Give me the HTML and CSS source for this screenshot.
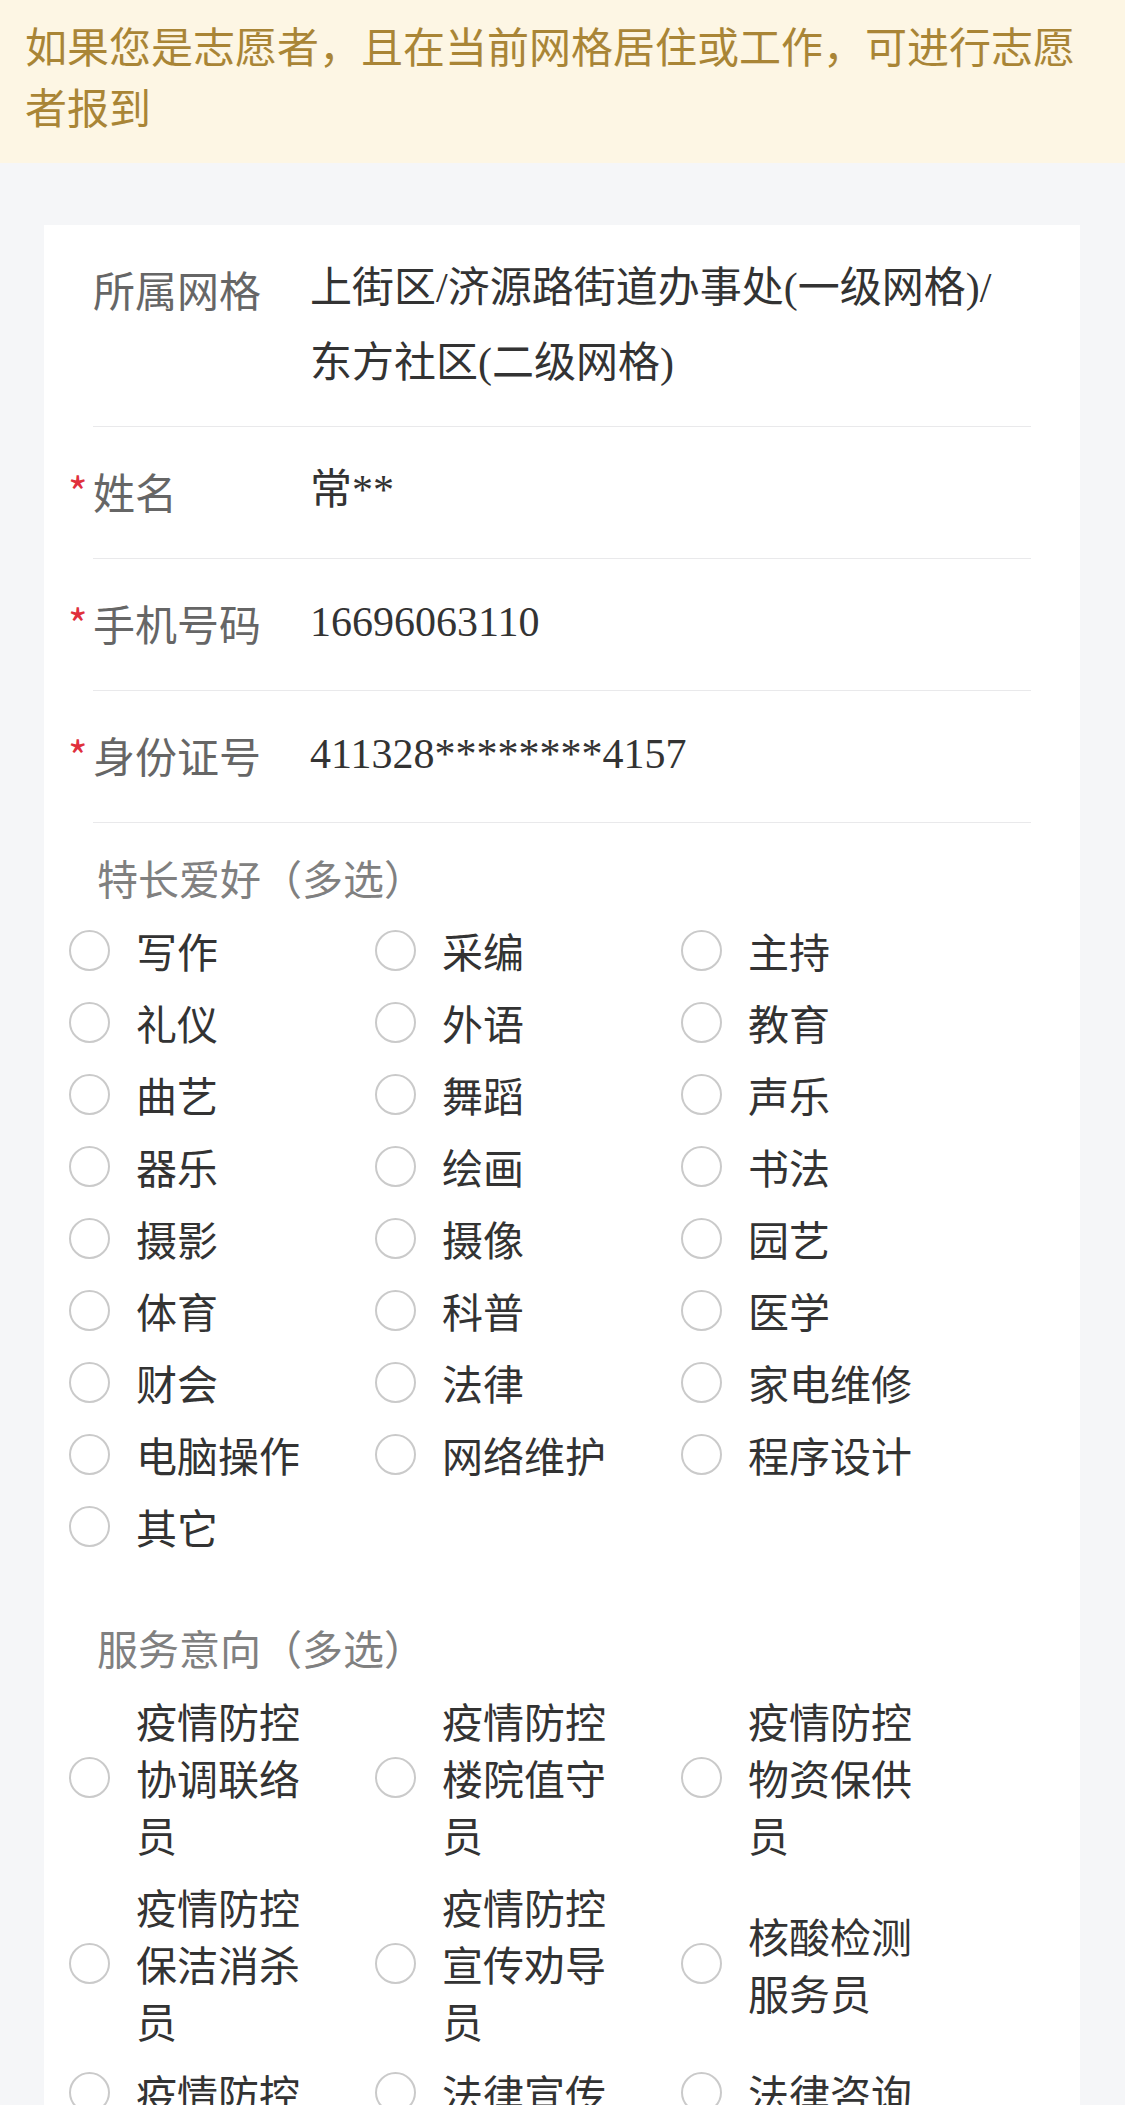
FILE: index.html
```html
<!DOCTYPE html>
<html lang="zh-CN">
<head>
<meta charset="utf-8">
<title>志愿者报到</title>
<link rel="stylesheet" href="styles.css">
</head>
<body>
<div class="notice">如果您是志愿者，且在当前网格居住或工作，可进行志愿者报到</div>
<div class="card">
  <div class="field">
    <div class="label">所属网格</div>
    <div class="value">上街区/济源路街道办事处(一级网格)/东方社区(二级网格)</div>
  </div>
  <div class="field">
    <div class="label"><span class="req">*</span>姓名</div>
    <div class="value">常**</div>
  </div>
  <div class="field">
    <div class="label"><span class="req">*</span>手机号码</div>
    <div class="value">16696063110</div>
  </div>
  <div class="field">
    <div class="label"><span class="req">*</span>身份证号</div>
    <div class="value">411328********4157</div>
  </div>

  <div class="section-title">特长爱好（多选）</div>
  <div class="options">
    <label class="option"><span class="radio"></span><span class="text">写作</span></label>
    <label class="option"><span class="radio"></span><span class="text">采编</span></label>
    <label class="option"><span class="radio"></span><span class="text">主持</span></label>
    <label class="option"><span class="radio"></span><span class="text">礼仪</span></label>
    <label class="option"><span class="radio"></span><span class="text">外语</span></label>
    <label class="option"><span class="radio"></span><span class="text">教育</span></label>
    <label class="option"><span class="radio"></span><span class="text">曲艺</span></label>
    <label class="option"><span class="radio"></span><span class="text">舞蹈</span></label>
    <label class="option"><span class="radio"></span><span class="text">声乐</span></label>
    <label class="option"><span class="radio"></span><span class="text">器乐</span></label>
    <label class="option"><span class="radio"></span><span class="text">绘画</span></label>
    <label class="option"><span class="radio"></span><span class="text">书法</span></label>
    <label class="option"><span class="radio"></span><span class="text">摄影</span></label>
    <label class="option"><span class="radio"></span><span class="text">摄像</span></label>
    <label class="option"><span class="radio"></span><span class="text">园艺</span></label>
    <label class="option"><span class="radio"></span><span class="text">体育</span></label>
    <label class="option"><span class="radio"></span><span class="text">科普</span></label>
    <label class="option"><span class="radio"></span><span class="text">医学</span></label>
    <label class="option"><span class="radio"></span><span class="text">财会</span></label>
    <label class="option"><span class="radio"></span><span class="text">法律</span></label>
    <label class="option"><span class="radio"></span><span class="text">家电维修</span></label>
    <label class="option"><span class="radio"></span><span class="text">电脑操作</span></label>
    <label class="option"><span class="radio"></span><span class="text">网络维护</span></label>
    <label class="option"><span class="radio"></span><span class="text">程序设计</span></label>
    <label class="option"><span class="radio"></span><span class="text">其它</span></label>
  </div>

  <div class="section-title section-gap">服务意向（多选）</div>
  <div class="options">
    <label class="option"><span class="radio"></span><span class="text">疫情防控协调联络员</span></label>
    <label class="option"><span class="radio"></span><span class="text">疫情防控楼院值守员</span></label>
    <label class="option"><span class="radio"></span><span class="text">疫情防控物资保供员</span></label>
    <label class="option"><span class="radio"></span><span class="text">疫情防控保洁消杀员</span></label>
    <label class="option"><span class="radio"></span><span class="text">疫情防控宣传劝导员</span></label>
    <label class="option"><span class="radio"></span><span class="text">核酸检测服务员</span></label>
    <label class="option"><span class="radio"></span><span class="text">疫情防控</span></label>
    <label class="option"><span class="radio"></span><span class="text">法律宣传</span></label>
    <label class="option"><span class="radio"></span><span class="text">法律咨询</span></label>
  </div>
</div>
</body>
</html>
```

FILE: styles.css
```css
* {
  box-sizing: border-box;
}

body {
  margin: 0;
  background: #f5f6f8;
  font-family: "Noto Sans CJK SC", "Noto Sans", sans-serif;
  color: #333333;
}

.notice {
  background: #fdf6e4;
  color: #a98536;
  font-size: 42px;
  line-height: 61px;
  padding: 14px 24px 27px 25px;
}

.card {
  background: #ffffff;
  margin: 62px 45px 0 44px;
  padding-bottom: 60px;
}

.field {
  display: flex;
  align-items: flex-start;
  margin: 0 49px;
  padding: 26px 0 25px;
  min-height: 132px;
  border-bottom: 1px solid #e9e9eb;
  font-size: 42px;
  line-height: 75px;
}

.label {
  position: relative;
  flex: 0 0 217px;
  color: #666666;
}

.req {
  position: absolute;
  left: -25px;
  top: 0;
  color: #e0303c;
  font-size: 42px;
}

.value {
  flex: 1;
  padding-right: 12px;
  color: #333333;
  font-family: "Liberation Serif", "Noto Sans CJK SC", serif;
}

.section-title {
  margin: 26px 0 0 53px;
  font-size: 41px;
  line-height: 57px;
  color: #808080;
}

.section-gap {
  margin-top: 64px;
}

.options {
  display: grid;
  grid-template-columns: repeat(3, 306px);
  row-gap: 15px;
  align-items: center;
  margin: 16px 0 0 25px;
}

.option {
  display: flex;
  align-items: center;
  font-size: 41px;
  line-height: 57px;
  color: #333333;
}

.radio {
  flex: 0 0 41px;
  width: 41px;
  height: 41px;
  border: 2.5px solid #cacaca;
  border-radius: 50%;
  margin-right: 26px;
}

.text {
  width: 170px;
}
```
